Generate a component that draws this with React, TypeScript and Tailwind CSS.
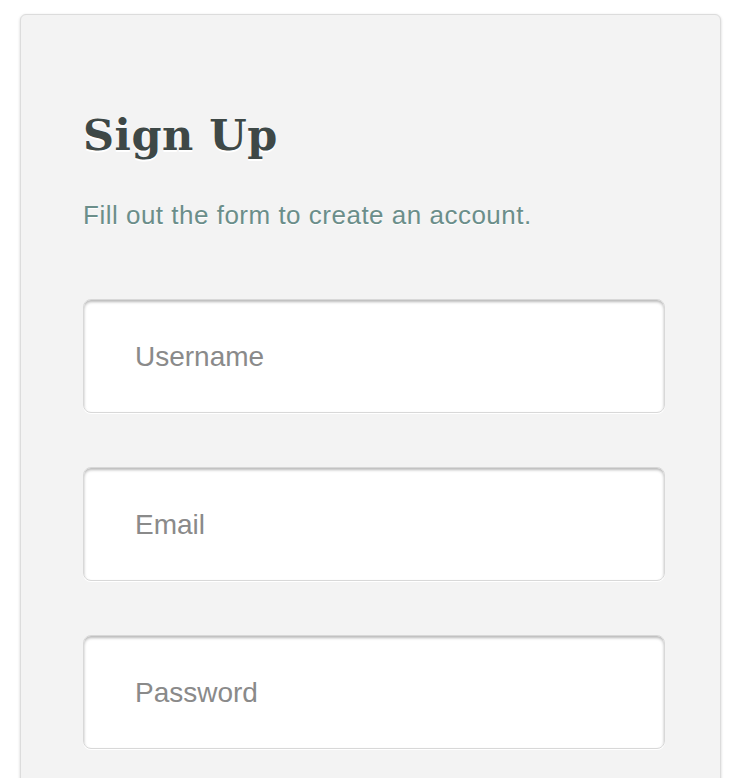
export default function App() {
  const fields = ["Username", "Email", "Password"];

  return (
    <div className="min-h-[778px] bg-white pt-[14px] pl-[20px] overflow-hidden">
      <div className="w-[701px] h-[800px] rounded-[6px] border border-[#dcdcdc] bg-[#f3f3f3] shadow-[0_1px_3px_rgba(0,0,0,0.18)] pl-[62px] pr-[56px] pt-[92px]">
        {/* Heading */}
        <h1
          className="text-[43px] leading-[56px] font-bold tracking-[0.5px] text-[#3e4846] [text-shadow:0_2px_0_#ffffff]"
          style={{ fontFamily: "'DejaVu Serif', serif" }}
        >
          Sign Up
        </h1>
        <p
          className="mt-[36px] text-[26px] leading-[32px] tracking-[0.5px] text-[#6b8e8a] [text-shadow:0_1px_0_#ffffff]"
          style={{ fontFamily: "'Liberation Sans', Arial, sans-serif" }}
        >
          Fill out the form to create an account.
        </p>

        {/* Fields */}
        <div className="mt-[68px] flex flex-col gap-[54px]">
          {fields.map((f) => (
            <input
              key={f}
              type={f === "Password" ? "password" : "text"}
              placeholder={f}
              className="w-[582px] h-[114px] rounded-[8px] bg-white pl-[51px] pt-[2px] text-[28px] text-[#555] placeholder:text-[#8a8a8a] outline-none border border-[#d8d8d8] shadow-[inset_0_2px_3px_rgba(0,0,0,0.28),0_1px_0_#ffffff]"
              style={{ fontFamily: "'Liberation Sans', Arial, sans-serif" }}
            />
          ))}
        </div>
      </div>
    </div>
  );
}
